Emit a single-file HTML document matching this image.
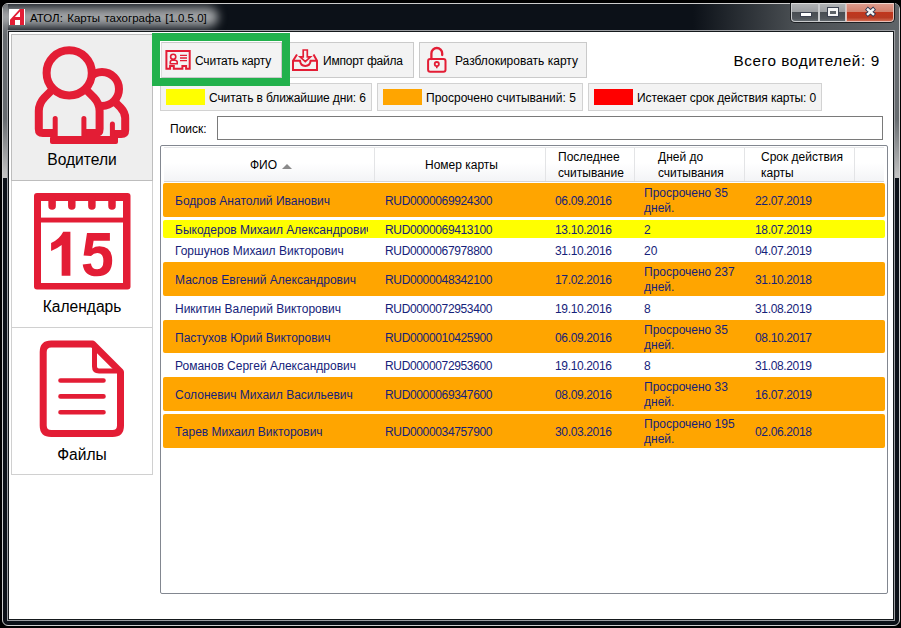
<!DOCTYPE html>
<html><head><meta charset="utf-8">
<style>
*{margin:0;padding:0;box-sizing:border-box}
html,body{width:901px;height:628px;overflow:hidden;background:#000}
body{position:relative;font-family:"Liberation Sans",sans-serif;font-size:12px;line-height:16px;color:#000}
.a{position:absolute}
.t{position:absolute;white-space:nowrap}
#win{left:2px;top:3px;width:898px;height:623px;border:1px solid #cdcdcd;border-radius:6px;background:#0c1118;overflow:hidden}
#client{left:7px;top:30px;width:888px;height:591px;border:1px solid #9c9ea2}
#client2{left:8px;top:31px;width:886px;height:589px;border:1px solid #15191c;background:#fff}
.side{left:11px;width:142px;border:1px solid #d0d0d0;background:#fff}
.lbl{font-size:15.6px;line-height:20px;text-align:center;left:11px;width:142px}
.btn{top:42px;height:36px;border:1px solid #cacaca;background:#f3f3f3}
.leg{top:83px;height:28px;border:1px solid #d2d2d2;background:#f3f3f3}
.sw{top:89px;width:39px;height:16px}
.hsep{top:148px;width:1px;height:33px;background:#e3e4e6}
.row{left:163px;width:722px;border-radius:2px}
.rt{color:#15227a}
.d{letter-spacing:-0.35px}
</style></head><body>

<div id="win" class="a">
  <!-- side gray strips -->
  <div class="a" style="left:0;top:0;width:5px;height:174px;background:linear-gradient(#676c70,#676c70 66%,#c2c2c2 99%)"></div>
  <div class="a" style="right:0;top:0;width:5px;height:174px;background:linear-gradient(#676c70,#676c70 66%,#c2c2c2 99%)"></div>
  <!-- title glow -->
  <div class="a" style="left:-30px;top:2px;width:245px;height:22px;border-radius:11px;background:linear-gradient(#6a6e72,#b6b8ba 50%,#6a6e72);filter:blur(5px)"></div>
  <!-- right gradient -->
  <div class="a" style="left:690px;top:0;width:206px;height:26px;background:linear-gradient(to right,rgba(90,95,99,0),#4a4f53 50%,#5f6468)"></div>
</div>

<!-- app icon -->
<div class="a" style="left:9px;top:9px;width:16px;height:16px;background:#fff">
  <svg width="16" height="16" viewBox="0 0 16 16" style="position:absolute;left:0;top:0"><path d="M1 16 L1 10.8 L10.8 0 L15 0 L15 16 L11 16 L11 11 L6 11 L6 16 Z M11 2.6 L11 8 L5.9 8 Z" fill="#e31d35" fill-rule="evenodd"/></svg>
</div>
<div class="t" style="left:30px;top:9.5px;font-size:11.5px;line-height:16px;color:#000;word-spacing:1.2px">АТОЛ: Карты тахографа [1.0.5.0]</div>

<!-- caption buttons -->
<div class="a" style="left:790px;top:3px;width:105px;height:20px;border:1px solid #1c1f22;border-top:none;border-radius:0 0 5px 5px;background:#2a2e31"></div>
<div class="a" style="left:791px;top:3px;width:28px;height:19px;border:1px solid #c9cbcd;border-top-color:#dcdcdc;border-radius:0 0 0 4px;background:linear-gradient(#b0b2b4,#9a9da0 45%,#474c51 46%,#52575c 85%,#646a6f)"></div>
<div class="a" style="left:801px;top:13px;width:10px;height:3px;background:#fff;outline:1px solid #3c4250"></div>
<div class="a" style="left:819px;top:3px;width:27px;height:19px;border:1px solid #c9cbcd;border-top-color:#dcdcdc;background:linear-gradient(#b0b2b4,#9a9da0 45%,#474c51 46%,#52575c 85%,#646a6f)"></div>
<div class="a" style="left:828px;top:8px;width:10px;height:8px;border:2px solid #f4f4f4;border-top-width:3px;outline:1px solid #3c4250;background:#5d6267"></div>
<div class="a" style="left:846px;top:3px;width:48px;height:19px;border:1px solid #e8c0b8;border-top-color:#f0d8d0;border-radius:0 0 4px 0;background:linear-gradient(#dc9a8c,#d2806c 45%,#c1361d 46%,#b83a22 80%,#cf6a50)"></div>
<svg class="a" style="left:863px;top:5px" width="15" height="14" viewBox="0 0 15 14"><path d="M3.4 3.2 L11.6 10.4 M11.6 3.2 L3.4 10.4" stroke="#2c3550" stroke-width="4.2"/><path d="M4.0 3.7 L11.0 9.9 M11.0 3.7 L4.0 9.9" stroke="#f4f4f4" stroke-width="2.5"/></svg>

<div id="client" class="a"></div>
<div id="client2" class="a"></div>

<!-- sidebar -->
<div class="a side" style="top:34px;height:147px;background:#eeeeee;border-color:#bdbdbd"></div>
<div class="a side" style="top:180px;height:148px;border-top:none"></div>
<div class="a" style="left:11px;top:180px;width:142px;height:1px;background:#bdbdbd"></div>
<div class="a side" style="top:327px;height:148px"></div>

<div class="t lbl" style="top:150.3px">Водители</div>
<div class="t lbl" style="top:297.3px">Календарь</div>
<div class="t lbl" style="top:444.5px">Файлы</div>

<!-- toolbar buttons -->
<div class="a btn" style="left:161px;width:121px;border-left-color:#dcdcdc"></div>
<div class="a btn" style="left:287px;width:127px"></div>
<div class="a btn" style="left:419px;width:168px"></div>
<div class="t" style="left:195px;top:53px;letter-spacing:-0.2px">Считать карту</div>
<div class="t" style="left:323px;top:53px;letter-spacing:-0.2px">Импорт файла</div>
<div class="t" style="left:455px;top:53px">Разблокировать карту</div>

<div class="t" style="left:733.5px;top:50.5px;font-size:15.3px;line-height:20px;letter-spacing:0.58px">Всего водителей: 9</div>

<!-- legend -->
<div class="a leg" style="left:160px;width:212px"></div>
<div class="a sw" style="left:166px;background:#ffff00"></div>
<div class="t" style="left:209px;top:90px;letter-spacing:-0.1px">Считать в ближайшие дни: 6</div>
<div class="a leg" style="left:377px;width:206px"></div>
<div class="a sw" style="left:383px;background:#ffa500"></div>
<div class="t" style="left:426px;top:90px">Просрочено считываний: 5</div>
<div class="a leg" style="left:588px;width:234px"></div>
<div class="a sw" style="left:594px;background:#ff0000"></div>
<div class="t" style="left:637px;top:90px;letter-spacing:-0.12px">Истекает срок действия карты: 0</div>

<!-- search -->
<div class="t" style="left:170px;top:121px">Поиск:</div>
<div class="a" style="left:217px;top:116px;width:666px;height:24px;border:1px solid #7a7a7a;background:#fff"></div>

<!-- grid -->
<div class="a" style="left:160px;top:145px;width:728px;height:449px;border:1px solid #828790;border-radius:2px;background:#fff"></div>
<div class="a" style="left:164px;top:147px;width:720px;height:35px;border-top:1px solid #e6e7e9;border-bottom:1px solid #d5d5d5;background:linear-gradient(#fff 0,#fff 45%,#f3f4f6 100%)"></div>
<div class="a hsep" style="left:374px"></div>
<div class="a hsep" style="left:545px"></div>
<div class="a hsep" style="left:634px"></div>
<div class="a hsep" style="left:744px"></div>
<div class="a hsep" style="left:854px"></div>
<div class="t" style="left:250px;top:157px">ФИО</div>
<svg class="a" style="left:282px;top:164px" width="10" height="5" viewBox="0 0 10 5"><path d="M0 5 L5 0 L10 5 Z" fill="#8a8a8a"/></svg>
<div class="t" style="left:425px;top:157px">Номер карты</div>
<div class="t" style="left:558px;top:149px">Последнее<br>считывание</div>
<div class="t" style="left:658px;top:149px">Дней до<br>считывания</div>
<div class="t" style="left:761px;top:149px">Срок действия<br>карты</div>


<!-- sidebar icons -->
<svg class="a" style="left:0;top:0" width="160" height="480" viewBox="0 0 160 480">
 <g fill="none" stroke="#e31d35" stroke-width="8">
  <circle cx="102" cy="89" r="17"/>
  <path d="M114 101 L120.5 107.5 Q125.2 112.5 125.2 118 L125.2 130 Q125.2 134 121.2 134 L112 134"/>
 </g>
 <path d="M53 89 L44.5 97.5 Q38.8 103.5 38.8 111 L38.8 133 L99.6 133 L99.6 111 Q99.6 103.5 93.9 97.5 L85.4 89 Z" fill="#eeeeee"/>
 <circle cx="69.2" cy="72.9" r="22.6" fill="#eeeeee" stroke="#e31d35" stroke-width="8"/>
 <g fill="none" stroke="#e31d35" stroke-width="8" stroke-linejoin="round">
  <path d="M53 89 L44.5 97.5 Q38.8 103.5 38.8 111 L38.8 129 Q38.8 133 42.8 133 L56 133"/>
  <path d="M85.4 89 L93.9 97.5 Q99.6 103.5 99.6 111 L99.6 129 Q99.6 133 95.6 133 L83 133"/>
 </g>
 <g stroke="#e31d35" stroke-width="5" stroke-linecap="round">
  <path d="M55.2 118.5 L55.2 138 M83.9 118.5 L83.9 138 M112.4 124 L112.4 136"/>
 </g>
 <rect x="50" y="136" width="68" height="8" rx="2" fill="#e31d35"/>

 <rect x="34" y="193" width="96.5" height="96.5" rx="3" fill="#e31d35"/>
 <rect x="41" y="201" width="82" height="16.6" fill="#fff"/>
 <rect x="41" y="222.5" width="82" height="60.5" fill="#fff"/>
 <g stroke="#e31d35" stroke-width="7.5" stroke-linecap="round">
  <path d="M52.1 199 L52.1 206 M71.8 199 L71.8 206 M91.9 199 L91.9 206 M112 199 L112 206"/>
 </g>
 <path d="M61.65 275.7 L70.4 275.7 L70.4 231.8 L63.2 231.8 Q59.5 239.5 51.1 243 L51.1 250.9 Q57 248.8 61.65 245 Z" fill="#e31d35"/>
 <path d="M87 232.9 L109.9 232.9 L109.9 240.8 L93.6 240.8 L92.3 248.6 Q95 246.2 99.5 246.2 Q112.2 246.5 112.2 260.5 Q112.2 276.3 97 276.3 Q84.3 276.3 82.7 264.4 L90.9 263.4 Q91.8 269.3 97.2 269.3 Q103.4 269.3 103.4 261 Q103.4 253 97.2 253 Q93.5 253 91.2 256 L83.6 255.4 Z" fill="#e31d35"/>

 <g fill="none" stroke="#e31d35" stroke-width="7" stroke-linejoin="round">
  <path d="M43.2 351.9 Q43.2 343.9 51.2 343.9 L92.5 343.9 L120.5 371.9 L120.5 425.5 Q120.5 433.5 112.5 433.5 L51.2 433.5 Q43.2 433.5 43.2 425.5 Z"/>
  <path d="M94.5 346 L94.5 366.5 Q94.5 371 99 371 L119 371" stroke-width="5"/>
 </g>
 <g stroke="#e31d35" stroke-width="4.6" stroke-linecap="round">
  <path d="M60.5 380.5 L103.5 380.5 M60.5 396.4 L103.5 396.4 M60.5 412.2 L103.5 412.2"/>
 </g>
</svg>

<!-- toolbar icons -->
<svg class="a" style="left:160px;top:40px" width="300" height="40" viewBox="160 40 300 40">
 <g fill="none" stroke="#e31d35" stroke-width="2">
  <path d="M166.4 51 L166.4 68.8 L170.1 68.8 L170.1 66.1 L173.8 66.1 L173.8 68.8 L182.4 68.8 L182.4 66.1 L186.1 66.1 L186.1 68.8 L189.7 68.8 L189.7 51 Z"/>
  <circle cx="173.2" cy="56.8" r="2.6" stroke-width="1.6"/>
  <path d="M170.3 63.8 L170.3 62 Q170.3 60.2 172.3 60.2 L174.8 60.2 Q177.2 60.2 177.2 62 L177.2 63.8 Z" stroke-width="1.6"/>
  <path d="M180 55.4 L187 55.4 M180 58 L187 58 M180 60.6 L187 60.6" stroke-width="1.3"/>
 </g>
 <g fill="none" stroke="#e31d35" stroke-width="2" stroke-linejoin="miter">
  <path d="M297 54.5 L293 60.7 L293 70 L317 70 L317 60.7 L313.5 54.5"/>
  <path d="M293 60.7 L300 60.7 Q300.5 66 305.3 66 Q310.2 66 310.6 60.7 L317 60.7"/>
  <path d="M303.2 50 L307.3 50 L307.3 56.9 L310.5 56.9 L305.3 61.6 L300.1 56.9 L303.2 56.9 Z" stroke-width="1.7"/>
 </g>
 <g fill="none" stroke="#e31d35" stroke-width="2">
  <rect x="428.1" y="59" width="17.4" height="12.8" rx="2"/>
  <path d="M431.4 59 L431.4 53.4 A5.4 5.4 0 0 1 442.2 53.4 L442.2 55" stroke-width="2.3" stroke-linecap="round"/>
  <circle cx="436.8" cy="64.1" r="2.1" stroke-width="1.8"/>
  <path d="M436.8 66 L436.8 68.3" stroke-width="1.6"/>
 </g>
</svg>

<!-- green annotation -->
<div class="a" style="left:152px;top:33px;width:138px;height:53px;border:8px solid #22b14c"></div>

<!-- rows -->
<div id="rows">
<div class="a row" style="top:183px;height:34px;background:#ffa500"></div>
<div class="t rt" style="left:175px;top:193.30px;width:193px;overflow:hidden">Бодров Анатолий Иванович</div>
<div class="t rt d" style="left:385px;top:193.30px">RUD0000069924300</div>
<div class="t rt d" style="left:555px;top:193.30px">06.09.2016</div>
<div class="t rt" style="left:644px;top:185.90px;line-height:15.6px">Просрочено 35<br>дней.</div>
<div class="t rt d" style="left:755px;top:193.30px">22.07.2019</div>
<div class="a row" style="top:220px;height:18px;background:#ffff00"></div>
<div class="t rt" style="left:175px;top:222.10px;width:193px;overflow:hidden">Быкодеров Михаил Александрович</div>
<div class="t rt d" style="left:385px;top:222.10px">RUD0000069413100</div>
<div class="t rt d" style="left:555px;top:222.10px">13.10.2016</div>
<div class="t rt" style="left:644px;top:222.10px">2</div>
<div class="t rt d" style="left:755px;top:222.10px">18.07.2019</div>
<div class="t rt" style="left:175px;top:243.10px;width:193px;overflow:hidden">Горшунов Михаил Викторович</div>
<div class="t rt d" style="left:385px;top:243.10px">RUD0000067978800</div>
<div class="t rt d" style="left:555px;top:243.10px">31.10.2016</div>
<div class="t rt" style="left:644px;top:243.10px">20</div>
<div class="t rt d" style="left:755px;top:243.10px">04.07.2019</div>
<div class="a row" style="top:262px;height:34px;background:#ffa500"></div>
<div class="t rt" style="left:175px;top:272.30px;width:193px;overflow:hidden">Маслов Евгений Александрович</div>
<div class="t rt d" style="left:385px;top:272.30px">RUD0000048342100</div>
<div class="t rt d" style="left:555px;top:272.30px">17.02.2016</div>
<div class="t rt" style="left:644px;top:264.90px;line-height:15.6px">Просрочено 237<br>дней.</div>
<div class="t rt d" style="left:755px;top:272.30px">31.10.2018</div>
<div class="t rt" style="left:175px;top:301.10px;width:193px;overflow:hidden">Никитин Валерий Викторович</div>
<div class="t rt d" style="left:385px;top:301.10px">RUD0000072953400</div>
<div class="t rt d" style="left:555px;top:301.10px">19.10.2016</div>
<div class="t rt" style="left:644px;top:301.10px">8</div>
<div class="t rt d" style="left:755px;top:301.10px">31.08.2019</div>
<div class="a row" style="top:320px;height:33px;background:#ffa500"></div>
<div class="t rt" style="left:175px;top:330.30px;width:193px;overflow:hidden">Пастухов Юрий Викторович</div>
<div class="t rt d" style="left:385px;top:330.30px">RUD0000010425900</div>
<div class="t rt d" style="left:555px;top:330.30px">06.09.2016</div>
<div class="t rt" style="left:644px;top:322.90px;line-height:15.6px">Просрочено 35<br>дней.</div>
<div class="t rt d" style="left:755px;top:330.30px">08.10.2017</div>
<div class="t rt" style="left:175px;top:358.10px;width:193px;overflow:hidden">Романов Сергей Александрович</div>
<div class="t rt d" style="left:385px;top:358.10px">RUD0000072953600</div>
<div class="t rt d" style="left:555px;top:358.10px">19.10.2016</div>
<div class="t rt" style="left:644px;top:358.10px">8</div>
<div class="t rt d" style="left:755px;top:358.10px">31.08.2019</div>
<div class="a row" style="top:377px;height:34px;background:#ffa500"></div>
<div class="t rt" style="left:175px;top:387.30px;width:193px;overflow:hidden">Солоневич Михаил Васильевич</div>
<div class="t rt d" style="left:385px;top:387.30px">RUD0000069347600</div>
<div class="t rt d" style="left:555px;top:387.30px">08.09.2016</div>
<div class="t rt" style="left:644px;top:379.90px;line-height:15.6px">Просрочено 33<br>дней.</div>
<div class="t rt d" style="left:755px;top:387.30px">16.07.2019</div>
<div class="a row" style="top:414px;height:34px;background:#ffa500"></div>
<div class="t rt" style="left:175px;top:424.30px;width:193px;overflow:hidden">Тарев Михаил Викторович</div>
<div class="t rt d" style="left:385px;top:424.30px">RUD0000034757900</div>
<div class="t rt d" style="left:555px;top:424.30px">30.03.2016</div>
<div class="t rt" style="left:644px;top:416.90px;line-height:15.6px">Просрочено 195<br>дней.</div>
<div class="t rt d" style="left:755px;top:424.30px">02.06.2018</div>
</div><!--/rows-->

</body></html>
